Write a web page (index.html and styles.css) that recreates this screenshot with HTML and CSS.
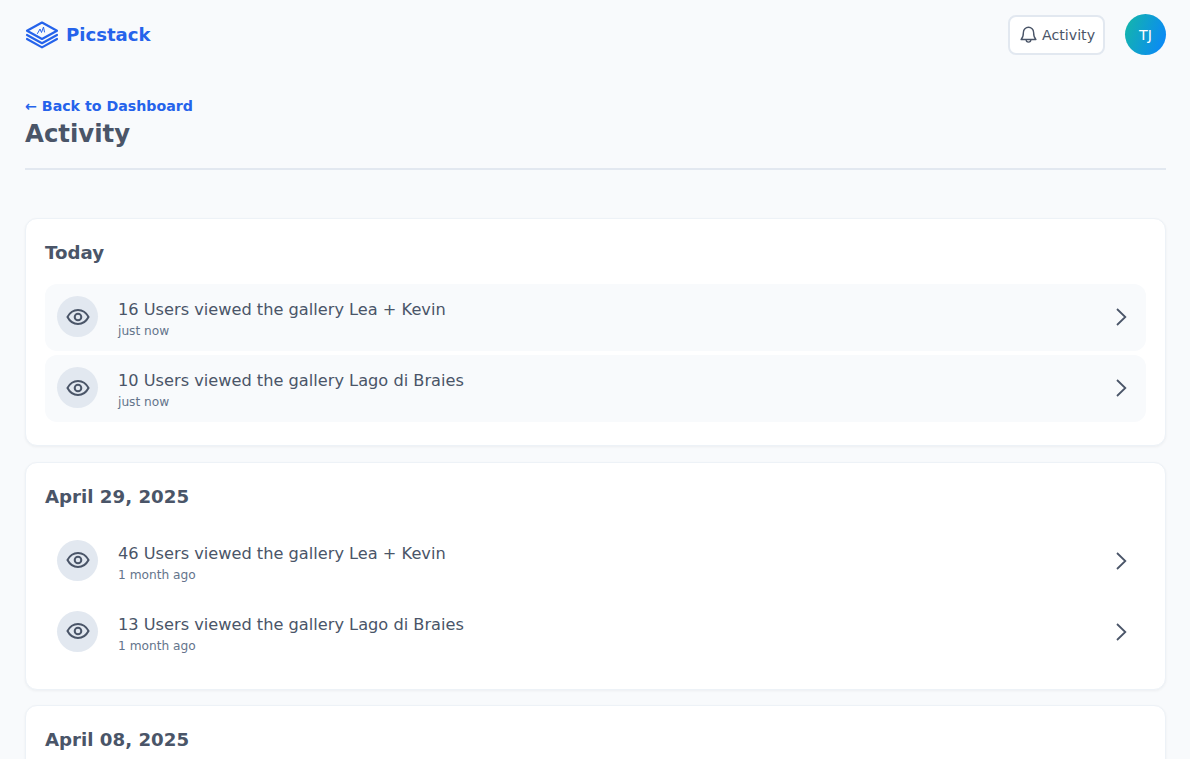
FILE: index.html
```html
<!DOCTYPE html>
<html lang="en">
<head>
    <meta charset="UTF-8">
    <meta name="viewport" content="width=device-width, initial-scale=1.0">
    <title>Picstack - Activity</title>
    <link rel="stylesheet" href="styles.css">
</head>
<body>
    <svg class="sprites" width="0" height="0">
        <symbol id="eye" viewBox="0 0 24 24">
            <path d="M1.500 12C3.800 7.600 7.600 5 12 5s8.200 2.600 10.500 7c-2.300 4.400-6.100 7-10.500 7S3.800 16.400 1.500 12z"/>
            <circle cx="12" cy="12" r="3.300"/>
        </symbol>
        <symbol id="chevron" viewBox="0 0 12 18">
            <path d="M2 1l8.300 8L2 17"/>
        </symbol>
    </svg>

    <header class="topbar">
        <a class="brand" href="#">
            <svg class="brand-logo" viewBox="0 0 34 28">
                <path d="M17 1.500 32 9.800 17 18 2 9.800z"/>
                <path d="M2 14 17 22.200 32 14"/>
                <path d="M2 18 17 26.400 32 18"/>
                <path class="thin" d="M12.500 12.500l2.500-4.500 1.500 3.500 2-5.500 1 5"/>
            </svg>
            <span class="brand-name">Picstack</span>
        </a>
        <div class="topbar-right">
            <button class="activity-btn">
                <svg class="bell" viewBox="0 0 16 17">
                    <path d="M8 1.200a4.800 4.800 0 0 0-4.800 4.800c0 3.800-1 5.600-2.200 6.800h14c-1.200-1.200-2.200-3-2.200-6.800A4.800 4.800 0 0 0 8 1.200z"/>
                    <path d="M5.800 13a2.200 2.200 0 0 0 4.400 0"/>
                </svg>
                Activity
            </button>
            <div class="avatar">TJ</div>
        </div>
    </header>

    <main class="page">
        <div class="page-head">
            <a class="back-link" href="#">← Back to Dashboard</a>
            <h1>Activity</h1>
        </div>

        <section class="card">
            <h2>Today</h2>
            <a class="row row-new" href="#">
                <span class="row-icon"><svg class="eye"><use href="#eye"/></svg></span>
                <span class="row-text">
                    <span class="row-title">16 Users viewed the gallery Lea + Kevin</span>
                    <span class="row-time">just now</span>
                </span>
                <svg class="chevron"><use href="#chevron"/></svg>
            </a>
            <a class="row row-new" href="#">
                <span class="row-icon"><svg class="eye"><use href="#eye"/></svg></span>
                <span class="row-text">
                    <span class="row-title">10 Users viewed the gallery Lago di Braies</span>
                    <span class="row-time">just now</span>
                </span>
                <svg class="chevron"><use href="#chevron"/></svg>
            </a>
        </section>

        <section class="card">
            <h2>April 29, 2025</h2>
            <a class="row" href="#">
                <span class="row-icon"><svg class="eye"><use href="#eye"/></svg></span>
                <span class="row-text">
                    <span class="row-title">46 Users viewed the gallery Lea + Kevin</span>
                    <span class="row-time">1 month ago</span>
                </span>
                <svg class="chevron"><use href="#chevron"/></svg>
            </a>
            <a class="row" href="#">
                <span class="row-icon"><svg class="eye"><use href="#eye"/></svg></span>
                <span class="row-text">
                    <span class="row-title">13 Users viewed the gallery Lago di Braies</span>
                    <span class="row-time">1 month ago</span>
                </span>
                <svg class="chevron"><use href="#chevron"/></svg>
            </a>
        </section>

        <section class="card card-last">
            <h2>April 08, 2025</h2>
        </section>
    </main>
</body>
</html>
```

FILE: styles.css
```css
* {
    box-sizing: border-box;
}
html, body {
    height: 100%;
    overflow: hidden;
}
body {
    margin: 0;
    background: #f8fafc;
    color: #4a5568;
    font-family: "DejaVu Sans", sans-serif;
}
a {
    color: inherit;
    text-decoration: none;
}
.sprites {
    position: absolute;
}

.topbar {
    display: flex;
    align-items: center;
    justify-content: space-between;
    height: 70px;
    padding: 0 24px 0 25px;
}
.brand {
    display: flex;
    align-items: center;
    gap: 7px;
    color: #2563eb;
    font-size: 18.100px;
    font-weight: 700;
}
.brand-name {
    padding-bottom: 2px;
}
.brand-logo {
    width: 34px;
    height: 28px;
    fill: none;
    stroke: #2563eb;
    stroke-width: 2.200;
    stroke-linejoin: round;
    stroke-linecap: round;
}
.brand-logo .thin {
    stroke-width: 1;
}
.topbar-right {
    display: flex;
    align-items: center;
    gap: 20px;
}
.activity-btn {
    display: flex;
    align-items: center;
    gap: 5px;
    height: 40px;
    width: 97px;
    padding: 0 0 0 10px;
    background: #fff;
    border: 2px solid #e2e8f0;
    border-radius: 8px;
    color: #4a5568;
    font-family: inherit;
    font-size: 14.200px;
}
.bell {
    width: 17px;
    height: 18px;
    fill: none;
    stroke: #4a5568;
    stroke-width: 1.300;
    stroke-linejoin: round;
}
.avatar {
    display: flex;
    align-items: center;
    justify-content: center;
    width: 41px;
    height: 41px;
    margin-bottom: 1px;
    border-radius: 50%;
    background: linear-gradient(110deg, #14b8a6, #0a84ff);
    color: #fff;
    font-size: 14.200px;
}

.page {
    padding: 0 24px 0 25px;
}
.page-head {
    margin-top: 25px;
    padding-bottom: 18px;
    margin-bottom: 48px;
    border-bottom: 2px solid #e2e8f0;
}
.back-link {
    display: block;
    color: #2563eb;
    font-size: 14.200px;
    font-weight: 700;
    line-height: 22px;
}
h1 {
    margin: 0;
    color: #4a5568;
    font-size: 24.400px;
    font-weight: 700;
    line-height: 33px;
}

.card {
    background: #fff;
    border: 1px solid #edf2f7;
    border-radius: 12px;
    padding: 20px 19px;
    margin-bottom: 15.500px;
    box-shadow: 0 1px 3px rgba(15, 23, 42, 0.05);
}
.card-last {
    min-height: 228px;
}
h2 {
    margin: 0 0 17.500px;
    color: #4a5568;
    font-size: 18.200px;
    font-weight: 600;
    line-height: 27px;
}
.row {
    display: flex;
    align-items: center;
    height: 67px;
    padding: 0 12px 1px;
    margin-bottom: 4px;
    border-radius: 12px;
}
.row:last-child {
    margin-bottom: 3.500px;
}
.row-new {
    background: #f8fafc;
}
.row-icon {
    display: flex;
    align-items: center;
    justify-content: center;
    flex-shrink: 0;
    width: 41px;
    height: 41px;
    margin-right: 20px;
    border-radius: 50%;
    background: #e2e8f0;
}
.eye {
    width: 24px;
    height: 24px;
    fill: none;
    stroke: #4a5568;
    stroke-width: 2;
}
.row-text {
    display: flex;
    flex-direction: column;
    flex: 1;
    padding-top: 6px;
}
.row-title {
    font-size: 16.200px;
    line-height: 24px;
}
.row-time {
    font-size: 12.200px;
    line-height: 19px;
    color: #64748b;
}
.chevron {
    width: 12px;
    height: 18px;
    margin-right: 7px;
    margin-top: 1px;
    fill: none;
    stroke: #4a5568;
    stroke-width: 1.800;
}
```
